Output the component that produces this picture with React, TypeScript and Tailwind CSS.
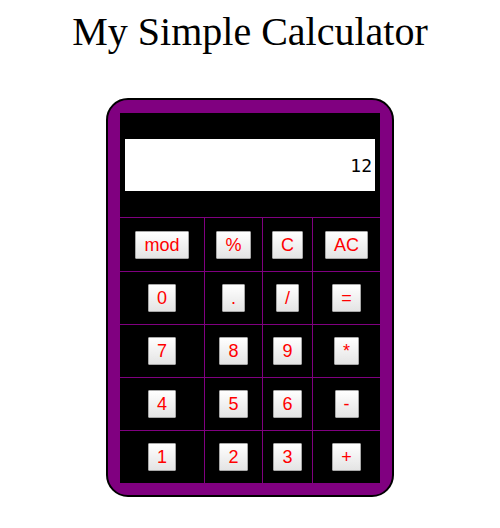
import React, { useState } from "react";

const rows = [
  ["mod", "%", "C", "AC"],
  ["0", ".", "/", "="],
  ["7", "8", "9", "*"],
  ["4", "5", "6", "-"],
  ["1", "2", "3", "+"],
];

function Key({ label, onPress }: { label: string; onPress: (k: string) => void }) {
  return (
    <button
      onClick={() => onPress(label)}
      className="h-[28px] px-[8px] border border-[#a8a8a8] rounded-[1px] bg-gradient-to-b from-white to-[#e4e4e4] text-[#ff0000] text-[18px] leading-[20px] font-['Liberation_Sans',Arial,sans-serif]"
    >
      {label}
    </button>
  );
}

export default function App() {
  const [display, setDisplay] = useState("12");

  const press = (k: string) => {
    if (k === "AC") return setDisplay("");
    if (k === "C") return setDisplay((d) => d.slice(0, -1));
    if (k === "=") {
      try {
        const expr = display.replace(/mod/g, "%");
        // eslint-disable-next-line no-new-func
        setDisplay(String(Function(`return (${expr})`)()));
      } catch {
        setDisplay("Error");
      }
      return;
    }
    setDisplay((d) => d + k);
  };

  return (
    <div className="min-h-screen bg-white">
      <h1 className="pt-[10px] text-center text-[40px] leading-[44px] text-black font-['Liberation_Serif','Times_New_Roman',serif]">
        My Simple Calculator
      </h1>

      <div className="mx-auto mt-[44px] w-[288px] rounded-[22px] border-2 border-black bg-[#800080] px-[12px] pt-[13px] pb-[12px]">
        <div className="bg-black">
          {/* display */}
          <div className="px-[5px] py-[26px]">
            <div className="flex h-[52px] items-center justify-end bg-white pr-[3px] text-[18px] text-black font-['DejaVu_Sans_Mono',monospace]">
              {display}
            </div>
          </div>

          {/* keypad */}
          <div className="grid grid-cols-[84px_57px_49px_67px] grid-rows-[53px_52px_52px_52px_52px] gap-px bg-[#800080] pt-px">
            {rows.flat().map((k) => (
              <div key={k} className="flex items-center justify-center bg-black">
                <Key label={k} onPress={press} />
              </div>
            ))}
          </div>
        </div>
      </div>
    </div>
  );
}
